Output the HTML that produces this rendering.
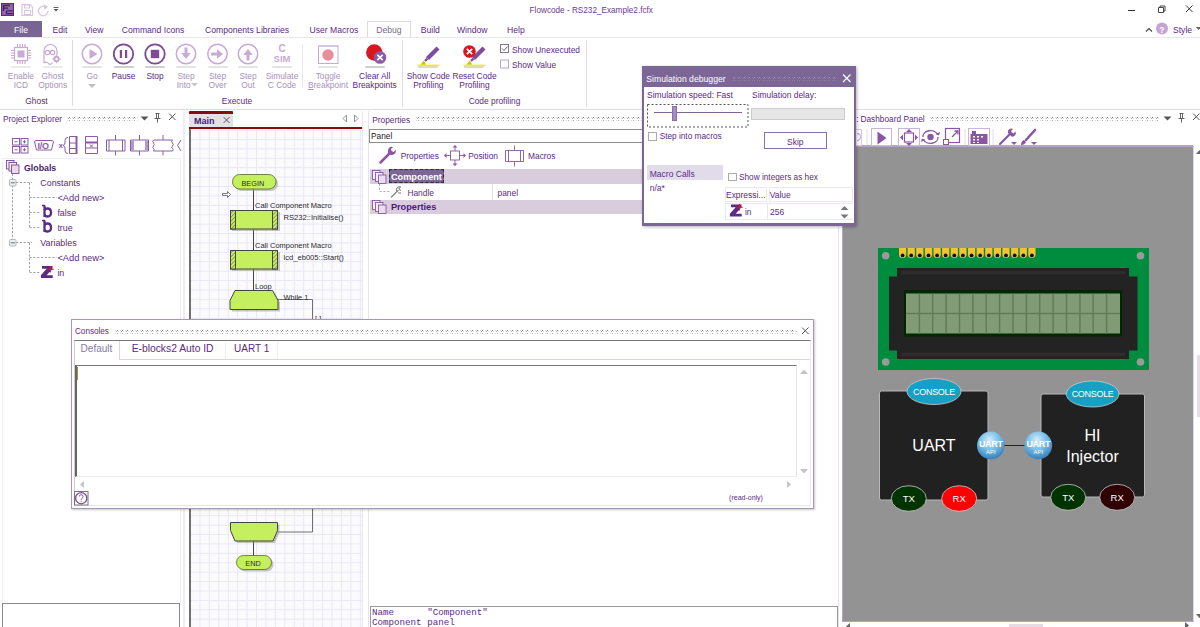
<!DOCTYPE html>
<html><head><meta charset="utf-8">
<style>
*{margin:0;padding:0;box-sizing:border-box}
html,body{width:1200px;height:627px;overflow:hidden;background:#fff;font-family:"Liberation Sans",sans-serif;color:#5b2a86}
.a{position:absolute}
.t{position:absolute;white-space:nowrap;line-height:1}
.grid{background-color:#fbfbfd;background-image:linear-gradient(#e8e6f8 1px,transparent 1px),linear-gradient(90deg,#e8e6f8 1px,transparent 1px);background-size:9.45px 9.415px}
.dots{position:absolute;height:5px;background-image:radial-gradient(circle,#b8b8b8 0.7px,transparent 0.9px);background-size:3.5px 3px;background-position:0 0}
</style></head><body>

<svg class="a" style="left:0;top:0" width="70" height="20" viewBox="0 0 70 20">
 <rect x="1" y="3" width="13" height="13" fill="#5d2a7e"/>
 <rect x="2.2" y="4.2" width="10.6" height="10.6" fill="#8c6aa8"/>
 <path d="M3.5 5.5h6.5M3.5 5.5v5.5M3.5 8.2h4.5M6.5 10.8h6.2M6.5 10.8v3M6.5 13.6h6.2" stroke="#4a1a6e" stroke-width="1.3" fill="none"/>
 <path d="M22 4.5h8l2.5 2.5v8.5h-10.5z" fill="none" stroke="#d8c4e2" stroke-width="1.2"/>
 <rect x="24.5" y="5" width="5" height="3" fill="none" stroke="#d8c4e2" stroke-width="1"/>
 <rect x="24.5" y="10.5" width="6" height="4" fill="none" stroke="#d8c4e2" stroke-width="1"/>
 <path d="M46.5 7.5a4.8 4.8 0 1 0 1.5 3.5" fill="none" stroke="#d8c4e2" stroke-width="1.2"/>
 <path d="M43.5 4.5l4.5 2-3.5 3.5z" fill="#d8c4e2"/>
 <path d="M53.5 7.5h5" stroke="#555" stroke-width="0.9"/><path d="M53.5 9h5l-2.5 2.5z" fill="#555"/>
</svg>
<div class="t" style="left:529.6px;top:6.73px;font-size:8.2px;color:#6a3a8e;">Flowcode - RS232_Example2.fcfx</div>
<div class="a" style="left:1128px;top:10px;width:7px;height:1.2px;background:#333"></div>
<svg class="a" style="left:1150px;top:0" width="50" height="20" viewBox="1150 0 50 20">
 <path d="M1158.5 7.5h5v5h-5zM1160 7.5v-1.5h5v5h-1.5" fill="none" stroke="#333" stroke-width="0.9"/>
 <path d="M1186 5.5l6.5 6.5M1192.5 5.5l-6.5 6.5" stroke="#333" stroke-width="1"/>
</svg>
<div class="a" style="left:0px;top:21px;width:42px;height:16.5px;background:#786593"></div>
<div class="t" style="left:-79.0px;top:26.29px;font-size:8.6px;color:#fff;width:200px;text-align:center;">File</div>
<div class="t" style="left:52.5px;top:26.29px;font-size:8.6px;color:#5b2a86;">Edit</div>
<div class="t" style="left:85px;top:26.29px;font-size:8.6px;color:#5b2a86;">View</div>
<div class="t" style="left:121.75px;top:26.29px;font-size:8.6px;color:#5b2a86;">Command Icons</div>
<div class="t" style="left:205px;top:26.29px;font-size:8.6px;color:#5b2a86;">Components Libraries</div>
<div class="t" style="left:309.5px;top:26.29px;font-size:8.6px;color:#5b2a86;">User Macros</div>
<div class="t" style="left:420.75px;top:26.29px;font-size:8.6px;color:#5b2a86;">Build</div>
<div class="t" style="left:457px;top:26.29px;font-size:8.6px;color:#5b2a86;">Window</div>
<div class="t" style="left:507px;top:26.29px;font-size:8.6px;color:#5b2a86;">Help</div>
<div class="a" style="left:367px;top:21px;width:44px;height:17px;border:1px solid #dcdcdc;border-bottom:none;background:#fff"></div>
<div class="t" style="left:376.25px;top:26.29px;font-size:8.6px;color:#7a6a8c;">Debug</div>
<svg class="a" style="left:1140px;top:20px" width="60" height="18" viewBox="1140 20 60 18">
 <path d="M1146 31.5l3-3 3 3" fill="none" stroke="#444" stroke-width="1.1"/>
 <circle cx="1162" cy="28.5" r="6" fill="#c4a4d2"/>
 <path d="M1196 27h5l-2.5 3z" fill="#666"/>
</svg>
<div class="t" style="left:1159.2px;top:25.57px;font-size:8.5px;color:#fff;font-weight:bold">?</div>
<div class="t" style="left:1173px;top:26.29px;font-size:8.6px;color:#5b2a86;">Style</div>
<div class="a" style="left:0px;top:37px;width:1200px;height:1px;background:#ebe6ee"></div>
<div class="a" style="left:0px;top:109px;width:1200px;height:1px;background:#e2dae6"></div>
<div class="a" style="left:72px;top:40px;width:1px;height:66px;background:#e2d8e8"></div>
<div class="a" style="left:402px;top:40px;width:1px;height:66px;background:#e2d8e8"></div>
<div class="a" style="left:586px;top:40px;width:1px;height:66px;background:#e2d8e8"></div>
<div class="a" style="left:302px;top:44px;width:1px;height:44px;background:#ece6f0"></div>
<div class="a" style="left:11px;top:66px;width:20px;height:2.2px;background:#ebebeb;border-radius:1px;filter:blur(0.4px)"></div>
<div class="a" style="left:42.5px;top:66px;width:20px;height:2.2px;background:#ebebeb;border-radius:1px;filter:blur(0.4px)"></div>
<div class="a" style="left:82px;top:66px;width:20px;height:2.2px;background:#e4e4e4;border-radius:1px;filter:blur(0.4px)"></div>
<div class="a" style="left:113.5px;top:66px;width:20px;height:2.2px;background:#cfcfcf;border-radius:1px;filter:blur(0.4px)"></div>
<div class="a" style="left:145px;top:66px;width:20px;height:2.2px;background:#cfcfcf;border-radius:1px;filter:blur(0.4px)"></div>
<div class="a" style="left:176px;top:66px;width:20px;height:2.2px;background:#e4e4e4;border-radius:1px;filter:blur(0.4px)"></div>
<div class="a" style="left:207.5px;top:66px;width:20px;height:2.2px;background:#e4e4e4;border-radius:1px;filter:blur(0.4px)"></div>
<div class="a" style="left:238px;top:66px;width:20px;height:2.2px;background:#e4e4e4;border-radius:1px;filter:blur(0.4px)"></div>
<div class="a" style="left:272px;top:66px;width:20px;height:2.2px;background:#e4e4e4;border-radius:1px;filter:blur(0.4px)"></div>
<div class="a" style="left:318px;top:66px;width:20px;height:2.2px;background:#e4e4e4;border-radius:1px;filter:blur(0.4px)"></div>
<div class="a" style="left:364.5px;top:66px;width:20px;height:2.2px;background:#d0d0d0;border-radius:1px;filter:blur(0.4px)"></div>
<div class="a" style="left:418px;top:66px;width:20px;height:2.2px;background:#d8d8d8;border-radius:1px;filter:blur(0.4px)"></div>
<div class="a" style="left:464px;top:66px;width:20px;height:2.2px;background:#d8d8d8;border-radius:1px;filter:blur(0.4px)"></div>
<svg class="a" style="left:0;top:38px" width="600" height="32" viewBox="0 38 600 32">
 <g stroke="#c8aad4" fill="none" stroke-width="1.2">
  <rect x="14.5" y="47.5" width="13" height="13"/>
  <path d="M17.5 44v3M20 44v3M22.5 44v3M25 44v3M17.5 61v3M20 61v3M22.5 61v3M25 61v3M11 50.5h3M11 53h3M11 55.5h3M11 58h3M28 50.5h3M28 53h3M28 55.5h3M28 58h3"/>
 </g>
 <rect x="17.5" y="50.5" width="7" height="7" fill="#c8aad4"/>
 <g stroke="#c8aad4" fill="none" stroke-width="1.2">
  <path d="M44 63 V51 a6.5 6.5 0 0 1 13 0 V55"/>
  <path d="M44 63 q2.5 -2 4.5 0.5 q2 2 4 -1"/>
  <circle cx="47.5" cy="52.5" r="2.2"/><circle cx="52.5" cy="52.5" r="2.2"/>
 </g>
 <circle cx="56.5" cy="59" r="3.2" fill="#c8aad4"/><circle cx="56.5" cy="59" r="1.2" fill="#fff"/>
 <path d="M56.5 54.8v1.5M56.5 61.7v1.5M52.3 59h1.5M59.2 59h1.5" stroke="#c8aad4" stroke-width="1.2"/>
 <circle cx="92" cy="54" r="9.7" fill="none" stroke="#c8aad4" stroke-width="1.5"/>
 <path d="M89.5 49 L97.5 54 L89.5 59Z" fill="#c8aad4"/>
 <circle cx="123.5" cy="54" r="9.7" fill="none" stroke="#7d4a96" stroke-width="1.8"/>
 <rect x="119.8" y="50" width="2.2" height="8" fill="#7d4a96"/><rect x="125" y="50" width="2.2" height="8" fill="#7d4a96"/>
 <circle cx="155" cy="54" r="9.7" fill="none" stroke="#7d4a96" stroke-width="1.8"/>
 <rect x="150.8" y="49.8" width="8.4" height="8.4" fill="#7d4a96"/>
 <circle cx="186" cy="54" r="9.7" fill="none" stroke="#c8aad4" stroke-width="1.5"/>
 <path d="M184.5 47.5h3v5.5h3.2l-4.7 6-4.7-6h3.2z" fill="#c8aad4"/>
 <circle cx="217.5" cy="54" r="9.7" fill="none" stroke="#c8aad4" stroke-width="1.5"/>
 <path d="M211 52.5h6v-3.2l6 4.7-6 4.7v-3.2h-6z" fill="#c8aad4"/>
 <circle cx="248" cy="54" r="9.7" fill="none" stroke="#c8aad4" stroke-width="1.5"/>
 <path d="M246.5 60.5h3v-5.5h3.2l-4.7-6-4.7 6h3.2z" fill="#c8aad4"/>
 <rect x="318.5" y="45.5" width="19.5" height="18" fill="none" stroke="#c8aad4" stroke-width="1"/>
 <rect x="318" y="45" width="20.5" height="2" fill="#d8c6de"/>
 <circle cx="328" cy="55" r="5.7" fill="#ec8d98"/>
 <circle cx="374.3" cy="52.5" r="8.2" fill="#d6171f"/>
 <circle cx="380" cy="57.5" r="6.3" fill="#8a5aa6"/>
 <path d="M377.3 54.8l5.4 5.4M382.7 54.8l-5.4 5.4" stroke="#fff" stroke-width="1.7"/>
 <path d="M438 48 L427.5 58.5" stroke="#804c9c" stroke-width="4.3"/>
 <path d="M427.5 58.5 L425 61" stroke="#804c9c" stroke-width="2.4"/>
 <path d="M420.5 64.8 L426.2 64.8 L423.8 60.5z" fill="#c8c400"/>
 <rect x="417.5" y="64.6" width="22" height="1.6" fill="#f4f000"/>
 <path d="M484 48 L473.5 58.5" stroke="#804c9c" stroke-width="4.3"/>
 <path d="M473.5 58.5 L471 61" stroke="#804c9c" stroke-width="2.4"/>
 <path d="M466.5 64.8 L472.2 64.8 L469.8 60.5z" fill="#c8c400"/>
 <rect x="463.5" y="64.6" width="22" height="1.6" fill="#f4f000"/>
 <circle cx="469.5" cy="51.5" r="6.3" fill="#d6171f"/>
 <path d="M466.8 48.8l5.4 5.4M472.2 48.8l-5.4 5.4" stroke="#fff" stroke-width="1.7"/>
 <rect x="500.5" y="44.5" width="8" height="8" fill="#fff" stroke="#8a70a0"/>
 <path d="M502 48.5l2 2 3.5-4" stroke="#555" fill="none" stroke-width="0.9"/>
 <rect x="500.5" y="60" width="8" height="8" fill="#fff" stroke="#b8a8c8"/>
</svg>
<div class="t" style="left:270px;top:44.30px;font-size:10px;color:#c8aad4;font-weight:bold;width:24px;text-align:center">C</div>
<div class="t" style="left:270px;top:53.72px;font-size:9.5px;color:#c8aad4;font-weight:bold;width:24px;text-align:center">SIM</div>
<div class="t" style="left:-9.100000000000001px;top:71.56px;font-size:8.4px;color:#a992bb;width:60px;text-align:center;">Enable</div>
<div class="t" style="left:-9.100000000000001px;top:80.56px;font-size:8.4px;color:#a992bb;width:60px;text-align:center;">ICD</div>
<div class="t" style="left:22.75px;top:71.56px;font-size:8.4px;color:#a992bb;width:60px;text-align:center;">Ghost</div>
<div class="t" style="left:22.75px;top:80.56px;font-size:8.4px;color:#a992bb;width:60px;text-align:center;">Options</div>
<div class="t" style="left:62.0px;top:71.56px;font-size:8.4px;color:#a992bb;width:60px;text-align:center;">Go</div>
<svg class="a" style="left:86px;top:83px" width="12" height="6"><path d="M2 1h8l-4 4z" fill="#c0c0c0"/></svg>
<div class="t" style="left:93.6px;top:71.56px;font-size:8.4px;color:#5b2a86;width:60px;text-align:center;">Pause</div>
<div class="t" style="left:125.0px;top:71.56px;font-size:8.4px;color:#5b2a86;width:60px;text-align:center;">Stop</div>
<div class="t" style="left:156.0px;top:71.56px;font-size:8.4px;color:#a992bb;width:60px;text-align:center;">Step</div>
<div class="t" style="left:156.0px;top:80.56px;font-size:8.4px;color:#a992bb;width:60px;text-align:center;">Into&nbsp;&nbsp;</div>
<svg class="a" style="left:190px;top:82px" width="10" height="6"><path d="M1 1h7l-3.5 3.5z" fill="#c8c8c8"/></svg>
<div class="t" style="left:187.5px;top:71.56px;font-size:8.4px;color:#a992bb;width:60px;text-align:center;">Step</div>
<div class="t" style="left:187.5px;top:80.56px;font-size:8.4px;color:#a992bb;width:60px;text-align:center;">Over</div>
<div class="t" style="left:218.0px;top:71.56px;font-size:8.4px;color:#a992bb;width:60px;text-align:center;">Step</div>
<div class="t" style="left:218.0px;top:80.56px;font-size:8.4px;color:#a992bb;width:60px;text-align:center;">Out</div>
<div class="t" style="left:252.0px;top:71.56px;font-size:8.4px;color:#a992bb;width:60px;text-align:center;">Simulate</div>
<div class="t" style="left:252.0px;top:80.56px;font-size:8.4px;color:#a992bb;width:60px;text-align:center;">C Code</div>
<div class="t" style="left:298.0px;top:71.56px;font-size:8.4px;color:#a992bb;width:60px;text-align:center;">Toggle</div>
<div class="t" style="left:298.0px;top:80.56px;font-size:8.4px;color:#a992bb;width:60px;text-align:center;"><u style="text-decoration-thickness:0.6px;text-underline-offset:1px">B</u>reakpoint</div>
<div class="t" style="left:344.7px;top:71.56px;font-size:8.4px;color:#5b2a86;width:60px;text-align:center;">Clear All</div>
<div class="t" style="left:344.7px;top:80.56px;font-size:8.4px;color:#5b2a86;width:60px;text-align:center;">Breakpoints</div>
<div class="t" style="left:398.4px;top:71.56px;font-size:8.4px;color:#5b2a86;width:60px;text-align:center;">Show Code</div>
<div class="t" style="left:398.4px;top:80.56px;font-size:8.4px;color:#5b2a86;width:60px;text-align:center;">Profiling</div>
<div class="t" style="left:444.5px;top:71.56px;font-size:8.4px;color:#5b2a86;width:60px;text-align:center;">Reset Code</div>
<div class="t" style="left:444.5px;top:80.56px;font-size:8.4px;color:#5b2a86;width:60px;text-align:center;">Profiling</div>
<div class="t" style="left:512px;top:45.66px;font-size:8.4px;color:#5b2a86;">Show Unexecuted</div>
<div class="t" style="left:512px;top:60.91px;font-size:8.4px;color:#5b2a86;">Show Value</div>
<div class="t" style="left:-63.5px;top:97.16px;font-size:8.4px;color:#5b2a86;width:200px;text-align:center;">Ghost</div>
<div class="t" style="left:137.0px;top:97.16px;font-size:8.4px;color:#5b2a86;width:200px;text-align:center;">Execute</div>
<div class="t" style="left:394.5px;top:97.16px;font-size:8.4px;color:#5b2a86;width:200px;text-align:center;">Code profiling</div>
<div class="t" style="left:3px;top:115.04px;font-size:8.3px;color:#5b2a86;">Project Explorer</div>
<svg class="a" style="left:67px;top:117px" width="71" height="4"><defs><pattern id="dp1" width="5" height="4" patternUnits="userSpaceOnUse">
<rect x="0" y="0" width="1" height="1" fill="#d8d8d8"/><rect x="2" y="0" width="1" height="1" fill="#7a7a7a"/>
<rect x="1" y="1" width="1" height="1" fill="#b0b0b0"/><rect x="3" y="1" width="1" height="1" fill="#d8d8d8"/>
<rect x="0" y="3" width="1" height="1" fill="#d8d8d8"/><rect x="2" y="3" width="1" height="1" fill="#b0b0b0"/>
</pattern></defs><rect width="71" height="4" fill="url(#dp1)"/></svg>
<svg class="a" style="left:138px;top:110px" width="46" height="18" viewBox="138 110 46 18">
 <path d="M140.5 116.5h8l-4 4z" fill="#555"/>
 <path d="M155.5 113.5h4M156.5 113.5v5M158.5 113.5v5M154.5 118.5h6M157.5 118.5v4" stroke="#555" stroke-width="0.9" fill="none"/>
 <path d="M169 113.5l6.5 6.5M175.5 113.5l-6.5 6.5" stroke="#555" stroke-width="1"/>
</svg>
<div class="a" style="left:183px;top:111px;width:2px;height:516px;background:#f0ecf2"></div>
<svg class="a" style="left:0;top:130px" width="184" height="28" viewBox="0 130 184 28">
 <g fill="none" stroke="#8a5aa6" stroke-width="1">
  <rect x="12.5" y="138.5" width="7" height="6.5"/><rect x="21" y="138.5" width="7" height="6.5"/>
  <rect x="12.5" y="146.5" width="7" height="6.5"/><rect x="21" y="146.5" width="7" height="6.5"/>
  <path d="M14.5 141.8h3M23 141.8h3M14.5 149.8h3M23 149.8h3M24.5 140.3v3M24.5 148.3v3"/>
  <path d="M34.5 141.5 l1.5 -1 h16 l1.5 1 l-2 8.5 h-15z"/>
  <path d="M69.5 136.5v17M69.5 136.5h7.5M69.5 143h7.5M69.5 148.5h7.5M69.5 153.5h7.5"/>
  <path d="M68 137.5q-3 0-3 3v2.5q0 2-2 2.5q2 0.5 2 2.5v2.5q0 3 3 3"/>
  <path d="M85.5 136.5h12v17h-12zM85.5 148h12M90 144.5l3 3M93 144.5l-3 3"/>
  <path d="M106.5 140h18.5v11h-18.5zM109 140v11M122.5 140v11M115.5 135v5M115.5 151v4.5"/>
  <path d="M130.5 140h18v11h-18zM139.5 135v5M139.5 151v4.5"/>
  <path d="M153.5 140h19q-1.5 1.5 0 3q1.5 1.5 0 3q-1.5 1.5 0 2.5q1.5 1.5 0 2.5h-19q1.5-1 0-2.5q-1.5-1 0-2.5q1.5-1.5 0-3q-1.5-1.5 0-3zM163 135v5M163 151v4.5"/>
  <path d="M181 140l-3.5 5.5l3.5 5.5"/>
 </g>
 <path d="M76.5 136v18M85.5 142.5h12" stroke="#8a5aa6" stroke-width="2"/>
 <rect x="131" y="140.5" width="3" height="10" fill="#b898c8"/><rect x="145" y="140.5" width="3" height="10" fill="#b898c8"/>
</svg>
<div class="t" style="left:37.5px;top:142.35px;font-size:9px;color:#8a5aa6;font-weight:bold;letter-spacing:-0.3px">I/O</div>
<div class="t" style="left:58.5px;top:142.20px;font-size:8px;color:#8a5aa6;font-weight:bold">x</div>
<div class="a" style="left:2px;top:158px;width:179px;height:445px;border-top:1px solid #f0f0f0;border-left:1px solid #eeeeee;border-right:1px solid #eeeeee"></div>
<svg class="a" style="left:0;top:158px" width="184" height="125" viewBox="0 158 184 125">
 <g stroke="#7a4a98" stroke-width="0.9">
  <rect x="6.5" y="160.5" width="7.5" height="8.5" fill="#f4eef8"/><rect x="9" y="162.5" width="7.5" height="8.5" fill="#f4eef8"/><rect x="11.5" y="165" width="7.5" height="8.5" fill="#e8d8f2"/>
 </g>
 <g stroke="#888" stroke-width="0.8" stroke-dasharray="2.2 1.6" fill="none">
  <path d="M12.5 174v68M16 182.5h16M29.5 183v44.5M29.5 197.5h27M29.5 212.5h10M29.5 227.5h10M16 242.5h16M29.5 243v29.5M29.5 257.5h27M29.5 272.5h10"/>
 </g>
 <rect x="9.5" y="179.5" width="6.5" height="6.5" rx="1" fill="#eee" stroke="#aaa" stroke-width="0.8"/><path d="M10.8 182.8h4" stroke="#5070a0"/>
 <rect x="9.5" y="239.5" width="6.5" height="6.5" rx="1" fill="#eee" stroke="#aaa" stroke-width="0.8"/><path d="M10.8 242.8h4" stroke="#5070a0"/>
 <path d="M44.5 205.5v11.5 M44.5 211q0-2.5 3-2.5q3.5 0 3.5 4q0 4-3.5 4q-3 0-3-2.5" fill="none" stroke="#5a2a86" stroke-width="2.3"/>
 <path d="M42 205.5h3" stroke="#5a2a86" stroke-width="1.5"/>
 <path d="M44.5 220.5v11.5 M44.5 226q0-2.5 3-2.5q3.5 0 3.5 4q0 4-3.5 4q-3 0-3-2.5" fill="none" stroke="#5a2a86" stroke-width="2.3"/>
 <path d="M42 220.5h3" stroke="#5a2a86" stroke-width="1.5"/>
 <path d="M42 266h10.5v2.8l-5.8 6.5h6v2.7h-11.8v-2.8l5.8-6.5h-4.7z" fill="#5a2a86"/>
 <path d="M50.5 266v6.5M47.2 269.2h6.6" stroke="#e01818" stroke-width="1.1"/>
</svg>
<div class="t" style="left:24px;top:163.72px;font-size:8.8px;color:#4a1a76;font-weight:bold">Globals</div>
<div class="t" style="left:40.3px;top:178.84px;font-size:8.9px;color:#5b2a86;">Constants</div>
<div class="t" style="left:57.4px;top:193.50px;font-size:9.3px;color:#5b2a86;">&lt;Add new&gt;</div>
<div class="t" style="left:57.4px;top:208.84px;font-size:8.9px;color:#5b2a86;">false</div>
<div class="t" style="left:57.4px;top:223.84px;font-size:8.9px;color:#5b2a86;">true</div>
<div class="t" style="left:40.3px;top:238.84px;font-size:8.9px;color:#5b2a86;">Variables</div>
<div class="t" style="left:57.4px;top:253.50px;font-size:9.3px;color:#5b2a86;">&lt;Add new&gt;</div>
<div class="t" style="left:57.4px;top:268.84px;font-size:8.9px;color:#5b2a86;">in</div>
<div class="a" style="left:2px;top:603px;width:178px;height:24px;border:1px solid #8a8a8a;border-bottom:none"></div>
<div class="a" style="left:189px;top:111px;width:44px;height:2.5px;background:#8b0a0a;border-radius:1px 1px 0 0"></div>
<div class="a" style="left:189px;top:113.5px;width:44px;height:13.5px;background:#e6dee8"></div>
<div class="t" style="left:194px;top:117.15px;font-size:9px;color:#4a1a76;font-weight:bold">Main</div>
<svg class="a" style="left:220px;top:112px" width="150" height="16" viewBox="220 112 150 16">
 <path d="M223.5 117l6 6M229.5 117l-6 6" stroke="#555" stroke-width="1"/>
 <path d="M346.5 115l-3.5 3.5 3.5 3.5z" fill="none" stroke="#888" stroke-width="0.9"/>
 <path d="M354.5 115l3.5 3.5-3.5 3.5z" fill="none" stroke="#888" stroke-width="0.9"/>
</svg>
<div class="a" style="left:189px;top:127px;width:174px;height:2px;background:#8b0a0a"></div>
<div class="a grid" style="left:189px;top:129px;width:173px;height:498px;border-left:2px solid #707070;background-position:-1px 0.6px"></div>
<div class="a" style="left:362px;top:111px;width:6px;height:516px;background:#fff;border-left:1px solid #ebe6ee"></div>
<svg class="a" style="left:189px;top:129px" width="174" height="498" viewBox="189 129 174 498">
 <defs>
  <pattern id="hatch" width="2.8" height="2.8" patternUnits="userSpaceOnUse" patternTransform="rotate(45)">
   <rect width="2.8" height="2.8" fill="#c8f060"/><path d="M0 0v2.8" stroke="#506020" stroke-width="1.1"/>
  </pattern>
 </defs>
 <g stroke="#444" stroke-width="1" fill="none">
  <path d="M253.5 189v21M253.5 229v21M253.5 269v21M253.5 541v15"/>
  <path d="M278 299.5h34.5v31M277.5 532h35v-30" stroke="#707070"/>
 </g>
 <g fill="#999" opacity="0.55">
  <rect x="234.5" y="176.5" width="43.5" height="14.5" rx="7.2"/>
  <rect x="232" y="212" width="48" height="19"/>
  <rect x="232" y="252" width="48" height="19"/>
  <path d="M237 292.5h37.5l5.5 10v9h-48v-9z"/>
  <path d="M232.5 524.5h47v8l-4.5 10.5h-38l-4.5-10.5z"/>
  <rect x="238.5" y="557.5" width="35" height="14" rx="7"/>
 </g>
 <rect x="232.5" y="174.5" width="43.5" height="14.5" rx="7.2" fill="#c4f060" stroke="#556a20" stroke-width="0.8"/>
 <rect x="230.5" y="210.5" width="47" height="18.5" fill="#c4f060" stroke="#444" stroke-width="1"/>
 <rect x="230.5" y="210.5" width="5" height="18.5" fill="url(#hatch)" stroke="#444" stroke-width="1"/>
 <rect x="272.5" y="210.5" width="5" height="18.5" fill="url(#hatch)" stroke="#444" stroke-width="1"/>
 <rect x="230.5" y="250.5" width="47" height="18.5" fill="#c4f060" stroke="#444" stroke-width="1"/>
 <rect x="230.5" y="250.5" width="5" height="18.5" fill="url(#hatch)" stroke="#444" stroke-width="1"/>
 <rect x="272.5" y="250.5" width="5" height="18.5" fill="url(#hatch)" stroke="#444" stroke-width="1"/>
 <path d="M235 290.5h37.5l5.5 10v9h-48v-9z" fill="#c4f060" stroke="#444" stroke-width="1"/>
 <path d="M230.5 522.5h47v8l-4.5 10.5h-38l-4.5-10.5z" fill="#c4f060" stroke="#444" stroke-width="1"/>
 <rect x="236.5" y="555.5" width="35" height="14" rx="7" fill="#c4f060" stroke="#556a20" stroke-width="0.8"/>
 <path d="M222.5 193.5h5v-2l3 3-3 3v-2h-5z" fill="#fff" stroke="#555" stroke-width="0.8"/>
</svg>
<div class="t" style="left:241.5px;top:180.29px;font-size:7.3px;color:#2a2a2a;">BEGIN</div>
<div class="t" style="left:245.3px;top:559.79px;font-size:7.3px;color:#2a2a2a;">END</div>
<div class="t" style="left:255px;top:202.43px;font-size:7.5px;color:#2a2a2a;">Call Component Macro</div>
<div class="t" style="left:283.5px;top:213.94px;font-size:7.6px;color:#2a2a2a;">RS232::Initialise()</div>
<div class="t" style="left:255px;top:242.43px;font-size:7.5px;color:#2a2a2a;">Call Component Macro</div>
<div class="t" style="left:283.5px;top:254.04px;font-size:7.6px;color:#2a2a2a;">lcd_eb005::Start()</div>
<div class="t" style="left:255px;top:282.62px;font-size:7.5px;color:#2a2a2a;">Loop</div>
<div class="t" style="left:283.5px;top:294.03px;font-size:7.5px;color:#2a2a2a;">While 1</div>
<div class="t" style="left:315px;top:314.85px;font-size:7px;color:#2a2a2a;">[-]</div>
<div class="a" style="left:368px;top:111px;width:1px;height:516px;background:#e8e2ec"></div>
<div class="t" style="left:372.3px;top:115.74px;font-size:8.3px;color:#5b2a86;">Properties</div>
<svg class="a" style="left:416px;top:117px" width="226" height="4"><defs><pattern id="dp2" width="5" height="4" patternUnits="userSpaceOnUse">
<rect x="0" y="0" width="1" height="1" fill="#d8d8d8"/><rect x="2" y="0" width="1" height="1" fill="#7a7a7a"/>
<rect x="1" y="1" width="1" height="1" fill="#b0b0b0"/><rect x="3" y="1" width="1" height="1" fill="#d8d8d8"/>
<rect x="0" y="3" width="1" height="1" fill="#d8d8d8"/><rect x="2" y="3" width="1" height="1" fill="#b0b0b0"/>
</pattern></defs><rect width="226" height="4" fill="url(#dp2)"/></svg>
<div class="a" style="left:369px;top:128.5px;width:280px;height:14px;border:1px solid #8c8c8c;border-right:none;background:#fff"></div>
<div class="t" style="left:371px;top:131.84px;font-size:8.3px;color:#222;">Panel</div>
<svg class="a" style="left:369px;top:144px" width="200" height="24" viewBox="369 144 200 24">
 <path d="M380.5 162.5 L390 153" stroke="#8a55a4" stroke-width="2.5" stroke-linecap="round"/>
 <path d="M388 152.5 a4.2 4.2 0 0 1 5 -5.5 l-2.2 2.2 l0.9 1.9 l1.9 0.9 l2.2 -2.2 a4.2 4.2 0 0 1 -5.5 5z" fill="#8a55a4"/>
 <g stroke="#8a55a4" fill="none" stroke-width="0.9">
  <rect x="450.5" y="151" width="9" height="9"/>
  <path d="M455 146v5M455 160v5M445 155.5h5.5M459.5 155.5h5.5"/>
 </g>
 <path d="M452.5 147.5l2.5-2.5 2.5 2.5zM452.5 163.5l2.5 2.5 2.5-2.5zM446.5 153l-2.5 2.5 2.5 2.5zM463.5 153l2.5 2.5-2.5 2.5z" fill="#8a55a4"/>
 <g stroke="#8a55a4" fill="none" stroke-width="0.9">
  <path d="M505.5 150.5h18v11h-18zM508.5 150.5v11M520.5 150.5v11M514.5 145.5v5M514.5 161.5v5"/>
 </g>
</svg>
<div class="t" style="left:400.7px;top:151.76px;font-size:8.4px;color:#5b2a86;">Properties</div>
<div class="t" style="left:468.2px;top:151.76px;font-size:8.4px;color:#5b2a86;">Position</div>
<div class="t" style="left:528px;top:151.76px;font-size:8.4px;color:#5b2a86;">Macros</div>
<div class="a" style="left:370px;top:169px;width:272px;height:14.7px;background:#d9ccdd"></div>
<div class="a" style="left:389px;top:169.3px;width:54.6px;height:14.2px;background:#7b6696;border:1px dashed #2a2a2a"></div>
<div class="t" style="left:390.9px;top:173.38px;font-size:9.2px;color:#fff;font-weight:bold">Component</div>
<div class="t" style="left:407.4px;top:189.46px;font-size:8.4px;color:#5b2a86;">Handle</div>
<div class="a" style="left:492px;top:184px;width:1px;height:15.5px;background:#e2dae6"></div>
<div class="t" style="left:497.5px;top:189.46px;font-size:8.4px;color:#5b2a86;">panel</div>
<div class="a" style="left:370px;top:199.6px;width:272px;height:14.3px;background:#d9ccdd"></div>
<div class="t" style="left:390.9px;top:203.48px;font-size:9.2px;color:#4a1a76;font-weight:bold">Properties</div>
<svg class="a" style="left:369px;top:169px" width="32" height="46" viewBox="369 169 32 46">
 <g stroke="#7a4a98" stroke-width="0.8">
  <rect x="372.5" y="170.5" width="7.5" height="9" fill="#f4eef8"/><rect x="375.5" y="172.5" width="7.5" height="9" fill="#f4eef8"/><rect x="378.5" y="175" width="7.5" height="8.5" fill="#eadcf4"/>
  <rect x="372.5" y="200.5" width="7.5" height="9" fill="#f4eef8"/><rect x="375.5" y="202.5" width="7.5" height="9" fill="#f4eef8"/><rect x="378.5" y="205" width="7.5" height="8.5" fill="#eadcf4"/>
 </g>
 <path d="M379.5 184v7.5h10" stroke="#999" stroke-width="0.8" stroke-dasharray="2.2 1.6" fill="none"/>
 <path d="M391.5 197l6.5-6.5" stroke="#8a8a8a" stroke-width="1.5" stroke-linecap="round"/>
 <path d="M397 191.5a3 3 0 0 1 3.5-4.5l-1.5 1.5 0.8 1.3 1.3 0.8 1.5-1.5a3 3 0 0 1-4.5 3.5" fill="none" stroke="#8a8a8a" stroke-width="1.1"/>
</svg>
<div class="a" style="left:369.5px;top:605.5px;width:468px;height:22px;border:1px solid #9a9a9a;border-bottom:none;background:#fff"></div>
<div class="t" style="left:372px;top:607.6px;font-size:9.2px;font-family:'Liberation Mono',monospace;color:#5b2a86;line-height:10.3px;white-space:pre">Name      "Component"
Component panel</div>
<div class="a" style="left:838px;top:111px;width:1px;height:516px;background:#e8e2ec"></div>
<div class="t" style="left:856.2px;top:115.24px;font-size:8.3px;color:#5b2a86;">:</div>
<div class="t" style="left:860.5px;top:115.24px;font-size:8.3px;color:#5b2a86;">Dashboard Panel</div>
<svg class="a" style="left:930px;top:117px" width="230" height="4"><defs><pattern id="dp3" width="5" height="4" patternUnits="userSpaceOnUse">
<rect x="0" y="0" width="1" height="1" fill="#d8d8d8"/><rect x="2" y="0" width="1" height="1" fill="#7a7a7a"/>
<rect x="1" y="1" width="1" height="1" fill="#b0b0b0"/><rect x="3" y="1" width="1" height="1" fill="#d8d8d8"/>
<rect x="0" y="3" width="1" height="1" fill="#d8d8d8"/><rect x="2" y="3" width="1" height="1" fill="#b0b0b0"/>
</pattern></defs><rect width="230" height="4" fill="url(#dp3)"/></svg>
<svg class="a" style="left:1160px;top:110px" width="40" height="18" viewBox="1160 110 40 18">
 <path d="M1163.5 116.5h8l-4 4z" fill="#555"/>
 <path d="M1179.5 113.5h4M1180.5 113.5v5M1182.5 113.5v5M1178.5 118.5h6M1181.5 118.5v4" stroke="#555" stroke-width="0.9" fill="none"/>
 <path d="M1193 113.5l6.5 6.5M1199.5 113.5l-6.5 6.5" stroke="#555" stroke-width="1"/>
</svg>
<svg class="a" style="left:840px;top:124px" width="360" height="24" viewBox="840 124 360 24">
 <path d="M841 145.5h352" stroke="#b8a0d0" stroke-width="1"/>
 <rect x="846.5" y="129.5" width="15" height="16" fill="none" stroke="#d8c8e4"/>
 <path d="M857 133.5a3.5 3.5 0 0 1 0 7" fill="none" stroke="#c8b4dc" stroke-width="1.3"/>
 <path d="M867 129v16M965 129v16M993 129v16" stroke="#e4dcea"/>
 <rect x="871.5" y="128.5" width="20" height="17" fill="none" stroke="#c8b4dc"/>
 <path d="M877.5 131.5l9 6.5-9 6.5z" fill="#8a55a4"/>
 <rect x="898.5" y="128.5" width="21" height="17" fill="none" stroke="#c8b4dc"/>
 <rect x="904.5" y="133" width="9" height="9" fill="none" stroke="#8a55a4" stroke-width="1.2"/>
 <path d="M906 132l3-3 3 3zM906 143l3 3 3-3zM903 134.5l-3 3 3 3zM915 134.5l3 3-3 3z" fill="#8a55a4"/>
 <circle cx="930.5" cy="137" r="3.2" fill="#8a55a4"/>
 <path d="M923 137a7.5 6 0 0 1 14.5-2.5M938 137a7.5 6 0 0 1 -14.5 2.5" fill="none" stroke="#8a55a4" stroke-width="1.3"/>
 <path d="M935.5 134l3.5 1.5 1-3.5zM925.5 140l-3.5-1.5-1 3.5z" fill="#8a55a4"/>
 <rect x="945.5" y="128.5" width="14" height="14" fill="none" stroke="#8a55a4" stroke-width="1.2"/>
 <rect x="943.5" y="139.5" width="5" height="5" fill="#fff" stroke="#8a55a4" stroke-width="1"/>
 <path d="M952 137l6-6M954.5 131h3.5v3.5" stroke="#8a55a4" stroke-width="1.3" fill="none"/>
 <rect x="968.5" y="128.5" width="21" height="17" fill="none" stroke="#c8b4dc"/>
 <rect x="972" y="131" width="4" height="3" fill="#8a55a4"/>
 <path d="M970.5 134h17v10h-17z" fill="#8a55a4"/>
 <path d="M973 136h2v1.5h-2zM977 136h2v1.5h-2zM981 136h2v1.5h-2zM973 139h2v1.5h-2zM977 139h2v1.5h-2zM973 142h2v1h-2zM977 142h2v1h-2z" fill="#fff"/>
 <path d="M1000 144l10-10" stroke="#8a55a4" stroke-width="2.2" stroke-linecap="round"/>
 <path d="M1008 133a3.5 3.5 0 0 1 5-4l-2 2 1 1.5 1.5 1 2-2a3.5 3.5 0 0 1-4 5z" fill="#8a55a4"/>
 <path d="M1011 142h6l-3 3z" fill="#8a55a4"/>
 <path d="M1026 140l9-10" stroke="#8a55a4" stroke-width="2.6" stroke-linecap="round"/>
 <path d="M1021 145q0-4 3-5l2 2q-1 3-5 3z" fill="#8a55a4"/>
 <path d="M1031 142h6l-3 3z" fill="#8a55a4"/>
</svg>
<div class="a" style="left:842px;top:146px;width:352px;height:476px;background:#939393;border:1px solid #b4a4c8;border-right-color:#ddd8e6"></div>
<svg class="a" style="left:840px;top:146px" width="360" height="481" viewBox="840 146 360 481">
 <path d="M1196 154l3.5-4 3.5 4z" fill="#666"/>
 <path d="M1196 614l3.5 4 3.5-4z" fill="#666"/>
 <path d="M850 623l-4 3.5 4 3.5z" fill="#666"/>
 <path d="M1185 622l4 3.5-4 3.5z" fill="#666"/>
</svg>
<div class="a" style="left:1009px;top:624px;width:34px;height:3px;background:#e6dce6"></div>
<div class="a" style="left:1197px;top:355px;width:3px;height:62px;background:#e6dce6"></div>
<svg class="a" style="left:842px;top:146px" width="352" height="476" viewBox="842 146 352 476">
 <rect x="878" y="248" width="271" height="122" fill="#008c3e"/>
 <g fill="#9a9a9a"><circle cx="885.7" cy="255.7" r="3.8"/><circle cx="1140.5" cy="255.7" r="3.8"/><circle cx="885.7" cy="362" r="3.8"/><circle cx="1140.5" cy="362" r="3.8"/></g>
 <g><path d="M899.0 248h7.2v6.5a3.6 3.6 0 0 1 -7.2 0z" fill="#f6c233"/><circle cx="902.6" cy="255.4" r="1.9" fill="#111"/><path d="M907.6 248h7.2v6.5a3.6 3.6 0 0 1 -7.2 0z" fill="#f6c233"/><circle cx="911.2" cy="255.4" r="1.9" fill="#111"/><path d="M916.2 248h7.2v6.5a3.6 3.6 0 0 1 -7.2 0z" fill="#f6c233"/><circle cx="919.8" cy="255.4" r="1.9" fill="#111"/><path d="M924.9 248h7.2v6.5a3.6 3.6 0 0 1 -7.2 0z" fill="#f6c233"/><circle cx="928.5" cy="255.4" r="1.9" fill="#111"/><path d="M933.5 248h7.2v6.5a3.6 3.6 0 0 1 -7.2 0z" fill="#f6c233"/><circle cx="937.1" cy="255.4" r="1.9" fill="#111"/><path d="M942.1 248h7.2v6.5a3.6 3.6 0 0 1 -7.2 0z" fill="#f6c233"/><circle cx="945.7" cy="255.4" r="1.9" fill="#111"/><path d="M950.7 248h7.2v6.5a3.6 3.6 0 0 1 -7.2 0z" fill="#f6c233"/><circle cx="954.3" cy="255.4" r="1.9" fill="#111"/><path d="M959.3 248h7.2v6.5a3.6 3.6 0 0 1 -7.2 0z" fill="#f6c233"/><circle cx="962.9" cy="255.4" r="1.9" fill="#111"/><path d="M968.0 248h7.2v6.5a3.6 3.6 0 0 1 -7.2 0z" fill="#f6c233"/><circle cx="971.6" cy="255.4" r="1.9" fill="#111"/><path d="M976.6 248h7.2v6.5a3.6 3.6 0 0 1 -7.2 0z" fill="#f6c233"/><circle cx="980.2" cy="255.4" r="1.9" fill="#111"/><path d="M985.2 248h7.2v6.5a3.6 3.6 0 0 1 -7.2 0z" fill="#f6c233"/><circle cx="988.8" cy="255.4" r="1.9" fill="#111"/><path d="M993.8 248h7.2v6.5a3.6 3.6 0 0 1 -7.2 0z" fill="#f6c233"/><circle cx="997.4" cy="255.4" r="1.9" fill="#111"/><path d="M1002.4 248h7.2v6.5a3.6 3.6 0 0 1 -7.2 0z" fill="#f6c233"/><circle cx="1006.0" cy="255.4" r="1.9" fill="#111"/><path d="M1011.1 248h7.2v6.5a3.6 3.6 0 0 1 -7.2 0z" fill="#f6c233"/><circle cx="1014.7" cy="255.4" r="1.9" fill="#111"/><path d="M1019.7 248h7.2v6.5a3.6 3.6 0 0 1 -7.2 0z" fill="#f6c233"/><circle cx="1023.3" cy="255.4" r="1.9" fill="#111"/><path d="M1028.3 248h7.2v6.5a3.6 3.6 0 0 1 -7.2 0z" fill="#f6c233"/><circle cx="1031.9" cy="255.4" r="1.9" fill="#111"/></g>
 <path d="M897 268h232v8.5h8.5v74h-8.5v8.5h-232v-8.5h-8v-74h8z" fill="#232323"/>
 <rect x="901" y="271" width="224" height="3.5" fill="#2d2d2d"/>
 <rect x="901" y="352.5" width="224" height="3.5" fill="#2d2d2d"/>
 <rect x="904" y="290" width="218" height="46.5" rx="1.5" fill="#002800"/>
 <rect x="906" y="293.5" width="214" height="40" fill="#809b76"/>
 <g><rect x="918.7" y="293.5" width="1.4" height="40" fill="#5f7a58"/><rect x="932.0" y="293.5" width="1.4" height="40" fill="#5f7a58"/><rect x="945.4" y="293.5" width="1.4" height="40" fill="#5f7a58"/><rect x="958.8" y="293.5" width="1.4" height="40" fill="#5f7a58"/><rect x="972.2" y="293.5" width="1.4" height="40" fill="#5f7a58"/><rect x="985.5" y="293.5" width="1.4" height="40" fill="#5f7a58"/><rect x="998.9" y="293.5" width="1.4" height="40" fill="#5f7a58"/><rect x="1012.3" y="293.5" width="1.4" height="40" fill="#5f7a58"/><rect x="1025.7" y="293.5" width="1.4" height="40" fill="#5f7a58"/><rect x="1039.0" y="293.5" width="1.4" height="40" fill="#5f7a58"/><rect x="1052.4" y="293.5" width="1.4" height="40" fill="#5f7a58"/><rect x="1065.8" y="293.5" width="1.4" height="40" fill="#5f7a58"/><rect x="1079.2" y="293.5" width="1.4" height="40" fill="#5f7a58"/><rect x="1092.5" y="293.5" width="1.4" height="40" fill="#5f7a58"/><rect x="1105.9" y="293.5" width="1.4" height="40" fill="#5f7a58"/><rect x="906" y="312.8" width="214" height="1.4" fill="#5f7a58"/></g>
 <rect x="879.5" y="391" width="108.5" height="109" rx="2" fill="#212121" stroke="#b8b8b8" stroke-width="1"/>
 <rect x="1041" y="394" width="103.5" height="103" rx="2" fill="#212121" stroke="#b8b8b8" stroke-width="1"/>
 <path d="M1004 445.5h22" stroke="#222" stroke-width="1"/>
 <defs>
  <radialGradient id="sph" cx="0.45" cy="0.3" r="0.75">
   <stop offset="0" stop-color="#d8ecf8"/><stop offset="0.45" stop-color="#7cc0e8"/><stop offset="1" stop-color="#2a78b8"/>
  </radialGradient>
 </defs>
 <ellipse cx="934" cy="391.5" rx="27" ry="13" fill="#15a0c4" stroke="#ccc" stroke-width="0.8"/>
 <ellipse cx="1092.6" cy="394" rx="26.3" ry="13" fill="#15a0c4" stroke="#ccc" stroke-width="0.8"/>
 <ellipse cx="908.8" cy="498.5" rx="17.5" ry="12.8" fill="#003300" stroke="#ccc" stroke-width="0.8"/>
 <ellipse cx="959.2" cy="498.5" rx="17.5" ry="12.8" fill="#ff0000" stroke="#ccc" stroke-width="0.8"/>
 <ellipse cx="1068.2" cy="497.3" rx="17.5" ry="13" fill="#003300" stroke="#ccc" stroke-width="0.8"/>
 <ellipse cx="1117.2" cy="497.3" rx="17.5" ry="13" fill="#300000" stroke="#ccc" stroke-width="0.8"/>
 <circle cx="990.8" cy="445.4" r="13.8" fill="url(#sph)"/>
 <circle cx="1038.3" cy="445.4" r="13.8" fill="url(#sph)"/>
 <g fill="#fff" font-family="Liberation Sans" text-anchor="middle">
  <text x="934" y="394.8" font-size="9" letter-spacing="-0.3">CONSOLE</text>
  <text x="1092.6" y="397.3" font-size="9" letter-spacing="-0.3">CONSOLE</text>
  <text x="934" y="451" font-size="16">UART</text>
  <text x="1092.5" y="441" font-size="16">HI</text>
  <text x="1092.5" y="462" font-size="16">Injector</text>
  <text x="908.8" y="502" font-size="9.5">TX</text>
  <text x="959.2" y="502" font-size="9.5">RX</text>
  <text x="1068.2" y="501" font-size="9.5">TX</text>
  <text x="1117.2" y="501" font-size="9.5">RX</text>
  <text x="990.8" y="447" font-size="9" font-weight="bold" letter-spacing="-0.3">UART</text>
  <text x="990.8" y="454" font-size="6">API</text>
  <text x="1038.3" y="447" font-size="9" font-weight="bold" letter-spacing="-0.3">UART</text>
  <text x="1038.3" y="454" font-size="6">API</text>
 </g>
</svg>
<div class="a" style="left:71px;top:319px;width:743px;height:190px;background:#fff;border:1px solid #a898b4;box-shadow:1px 1px 2px rgba(0,0,0,0.22)"></div>
<div class="t" style="left:75px;top:327.67px;font-size:8.15px;color:#5b2a86;">Consoles</div>
<svg class="a" style="left:115px;top:330px" width="682" height="4"><defs><pattern id="dp4" width="5" height="4" patternUnits="userSpaceOnUse">
<rect x="0" y="0" width="1" height="1" fill="#d8d8d8"/><rect x="2" y="0" width="1" height="1" fill="#7a7a7a"/>
<rect x="1" y="1" width="1" height="1" fill="#b0b0b0"/><rect x="3" y="1" width="1" height="1" fill="#d8d8d8"/>
<rect x="0" y="3" width="1" height="1" fill="#d8d8d8"/><rect x="2" y="3" width="1" height="1" fill="#b0b0b0"/>
</pattern></defs><rect width="682" height="4" fill="url(#dp4)"/></svg>
<svg class="a" style="left:798px;top:324px" width="14" height="14" viewBox="798 324 14 14">
 <path d="M802 327.5l6.5 6.5M808.5 327.5l-6.5 6.5" stroke="#555" stroke-width="1"/>
</svg>
<div class="a" style="left:74px;top:340px;width:737px;height:166px;border-top:1px solid #777;border-left:1px solid #cfcfcf;border-right:1px solid #eee;border-bottom:1px solid #e8e4ec"></div>
<div class="a" style="left:75px;top:359px;width:735px;height:1px;background:#ddd4e2"></div>
<div class="a" style="left:75px;top:341px;width:44.5px;height:19px;background:#fff;border-right:1px solid #ddd4e2"></div>
<div class="a" style="left:225px;top:342px;width:1px;height:17px;background:#eeeeee"></div>
<div class="a" style="left:277px;top:342px;width:1px;height:17px;background:#eeeeee"></div>
<div class="t" style="left:80.6px;top:344.10px;font-size:10px;color:#8478a8;">Default</div>
<div class="t" style="left:131.7px;top:343.85px;font-size:10.3px;color:#5b2a86;">E-blocks2 Auto ID</div>
<div class="t" style="left:234px;top:344.10px;font-size:10px;color:#5b2a86;">UART 1</div>
<div class="a" style="left:75px;top:365px;width:722px;height:112px;border-top:1px solid #777;border-left:2px solid #666;border-right:1px solid #e4e4e4;border-bottom:1px solid #eee"></div>
<div class="a" style="left:77px;top:367px;width:1px;height:13px;background:#a0a020"></div>
<svg class="a" style="left:74px;top:365px" width="740" height="145" viewBox="74 365 740 145">
 <path d="M800 374l4-4.5 4 4.5z M800 469l4 4.5 4-4.5z" fill="#c4c4c4"/>
 <path d="M84 481l-4 3.5 4 3.5z M787 481l4 3.5-4 3.5z" fill="#c4c4c4"/>
 <rect x="74.5" y="491.5" width="13.5" height="13.5" fill="#fff" stroke="#777" stroke-width="1"/>
 <circle cx="81.2" cy="498.2" r="5.6" fill="none" stroke="#7a4a98" stroke-width="1.3"/>
 <path d="M79.3 496.5a1.9 1.9 0 1 1 2.6 1.8q-0.7 0.3-0.7 1.2v0.6" fill="none" stroke="#7a4a98" stroke-width="0.9"/>
 <circle cx="81.2" cy="501.6" r="0.6" fill="#7a4a98"/>
</svg>
<div class="t" style="left:729.1px;top:493.55px;font-size:7px;color:#5b2a86;">(read-only)</div>
<div class="a" style="left:642px;top:66px;width:214px;height:160px;background:#7b6696;box-shadow:1px 1px 3px rgba(0,0,0,0.3)"></div>
<div class="a" style="left:644px;top:87px;width:210px;height:136px;background:#fff"></div>
<div class="t" style="left:646.3px;top:74.84px;font-size:8.66px;color:#fff;">Simulation debugger</div>
<svg class="a" style="left:732px;top:77px" width="105" height="4"><defs><pattern id="dp5" width="5" height="4" patternUnits="userSpaceOnUse">
<rect x="0" y="0" width="1" height="1" fill="#8a78a2"/><rect x="2" y="0" width="1" height="1" fill="#a898c0"/>
<rect x="1" y="1" width="1" height="1" fill="#9080a8"/><rect x="3" y="1" width="1" height="1" fill="#8a78a2"/>
<rect x="0" y="3" width="1" height="1" fill="#8a78a2"/><rect x="2" y="3" width="1" height="1" fill="#9080a8"/>
</pattern></defs><rect width="105" height="4" fill="url(#dp5)"/></svg>
<svg class="a" style="left:838px;top:70px" width="16" height="16" viewBox="838 70 16 16">
 <path d="M843 74.5l7.5 7.5M850.5 74.5l-7.5 7.5" stroke="#fff" stroke-width="1.2"/>
</svg>
<div class="t" style="left:647px;top:91.22px;font-size:8.45px;color:#5b2a86;">Simulation speed: Fast</div>
<div class="t" style="left:752px;top:91.22px;font-size:8.45px;color:#5b2a86;">Simulation delay:</div>
<svg class="a" style="left:647px;top:104px" width="102" height="24"><rect x="0.5" y="0.5" width="100.5" height="22.5" fill="none" stroke="#555" stroke-dasharray="2 2"/></svg>
<div class="a" style="left:653.5px;top:112px;width:88.5px;height:1px;background:#7b6696"></div>
<div class="a" style="left:672px;top:106px;width:4.5px;height:15px;background:#a68cc4;border:1px solid #8a70a8"></div>
<div class="a" style="left:751.2px;top:107.5px;width:94.2px;height:12.2px;background:#e6e6e6;border:1px solid #ccc"></div>
<div class="a" style="left:648px;top:132px;width:9px;height:9px;border:1px solid #aaa;background:#fff"></div>
<div class="t" style="left:659.7px;top:133.18px;font-size:8.26px;color:#5b2a86;">Step into macros</div>
<div class="a" style="left:764px;top:132.4px;width:62.6px;height:17px;border:1px solid #8a70a8;background:#fff"></div>
<div class="t" style="left:765.3px;top:137.62px;font-size:8.45px;color:#5b2a86;width:60px;text-align:center;">Skip</div>
<div class="a" style="left:646.5px;top:165.4px;width:76.5px;height:15.1px;background:#e2dcea"></div>
<div class="t" style="left:649.7px;top:170.34px;font-size:8.54px;color:#5b2a86;">Macro Calls</div>
<div class="t" style="left:649.7px;top:184.34px;font-size:8.54px;color:#5b2a86;">n/a*</div>
<div class="a" style="left:727.5px;top:172.5px;width:9.2px;height:8.5px;border:1px solid #aaa;background:#fff"></div>
<div class="t" style="left:739px;top:173.78px;font-size:8.26px;color:#5b2a86;">Show integers as hex</div>
<div class="a" style="left:724.6px;top:187.3px;width:42px;height:14.5px;border:1px solid #ece6f0"></div>
<div class="a" style="left:768.5px;top:187.3px;width:84px;height:14.5px;border:1px solid #ece6f0"></div>
<div class="a" style="left:724.6px;top:203px;width:128px;height:17px;border:1px solid #ece6f0;border-right:none"></div>
<div class="a" style="left:766.5px;top:203px;width:1px;height:17px;background:#ece6f0"></div>
<div class="t" style="left:726px;top:191.32px;font-size:8.45px;color:#5b2a86;">Expressi...</div>
<div class="t" style="left:769.8px;top:191.32px;font-size:8.45px;color:#5b2a86;">Value</div>
<svg class="a" style="left:724px;top:202px" width="130" height="20" viewBox="724 202 130 20">
 <path d="M731 204.5h10.5v2.8l-5.8 6.5h6v2.7h-11.8v-2.8l5.8-6.5h-4.7z" fill="#5a2a86"/>
 <path d="M739.5 204v6.5M736.2 207.2h6.6" stroke="#e01818" stroke-width="1.1"/>
 <path d="M840.5 210l4-4 4 4z M840.5 214.5l4 4 4-4z" fill="#777"/>
</svg>
<div class="t" style="left:745px;top:207.62px;font-size:8.45px;color:#5b2a86;">in</div>
<div class="t" style="left:770px;top:207.62px;font-size:8.45px;color:#5b2a86;">256</div>
</body></html>
